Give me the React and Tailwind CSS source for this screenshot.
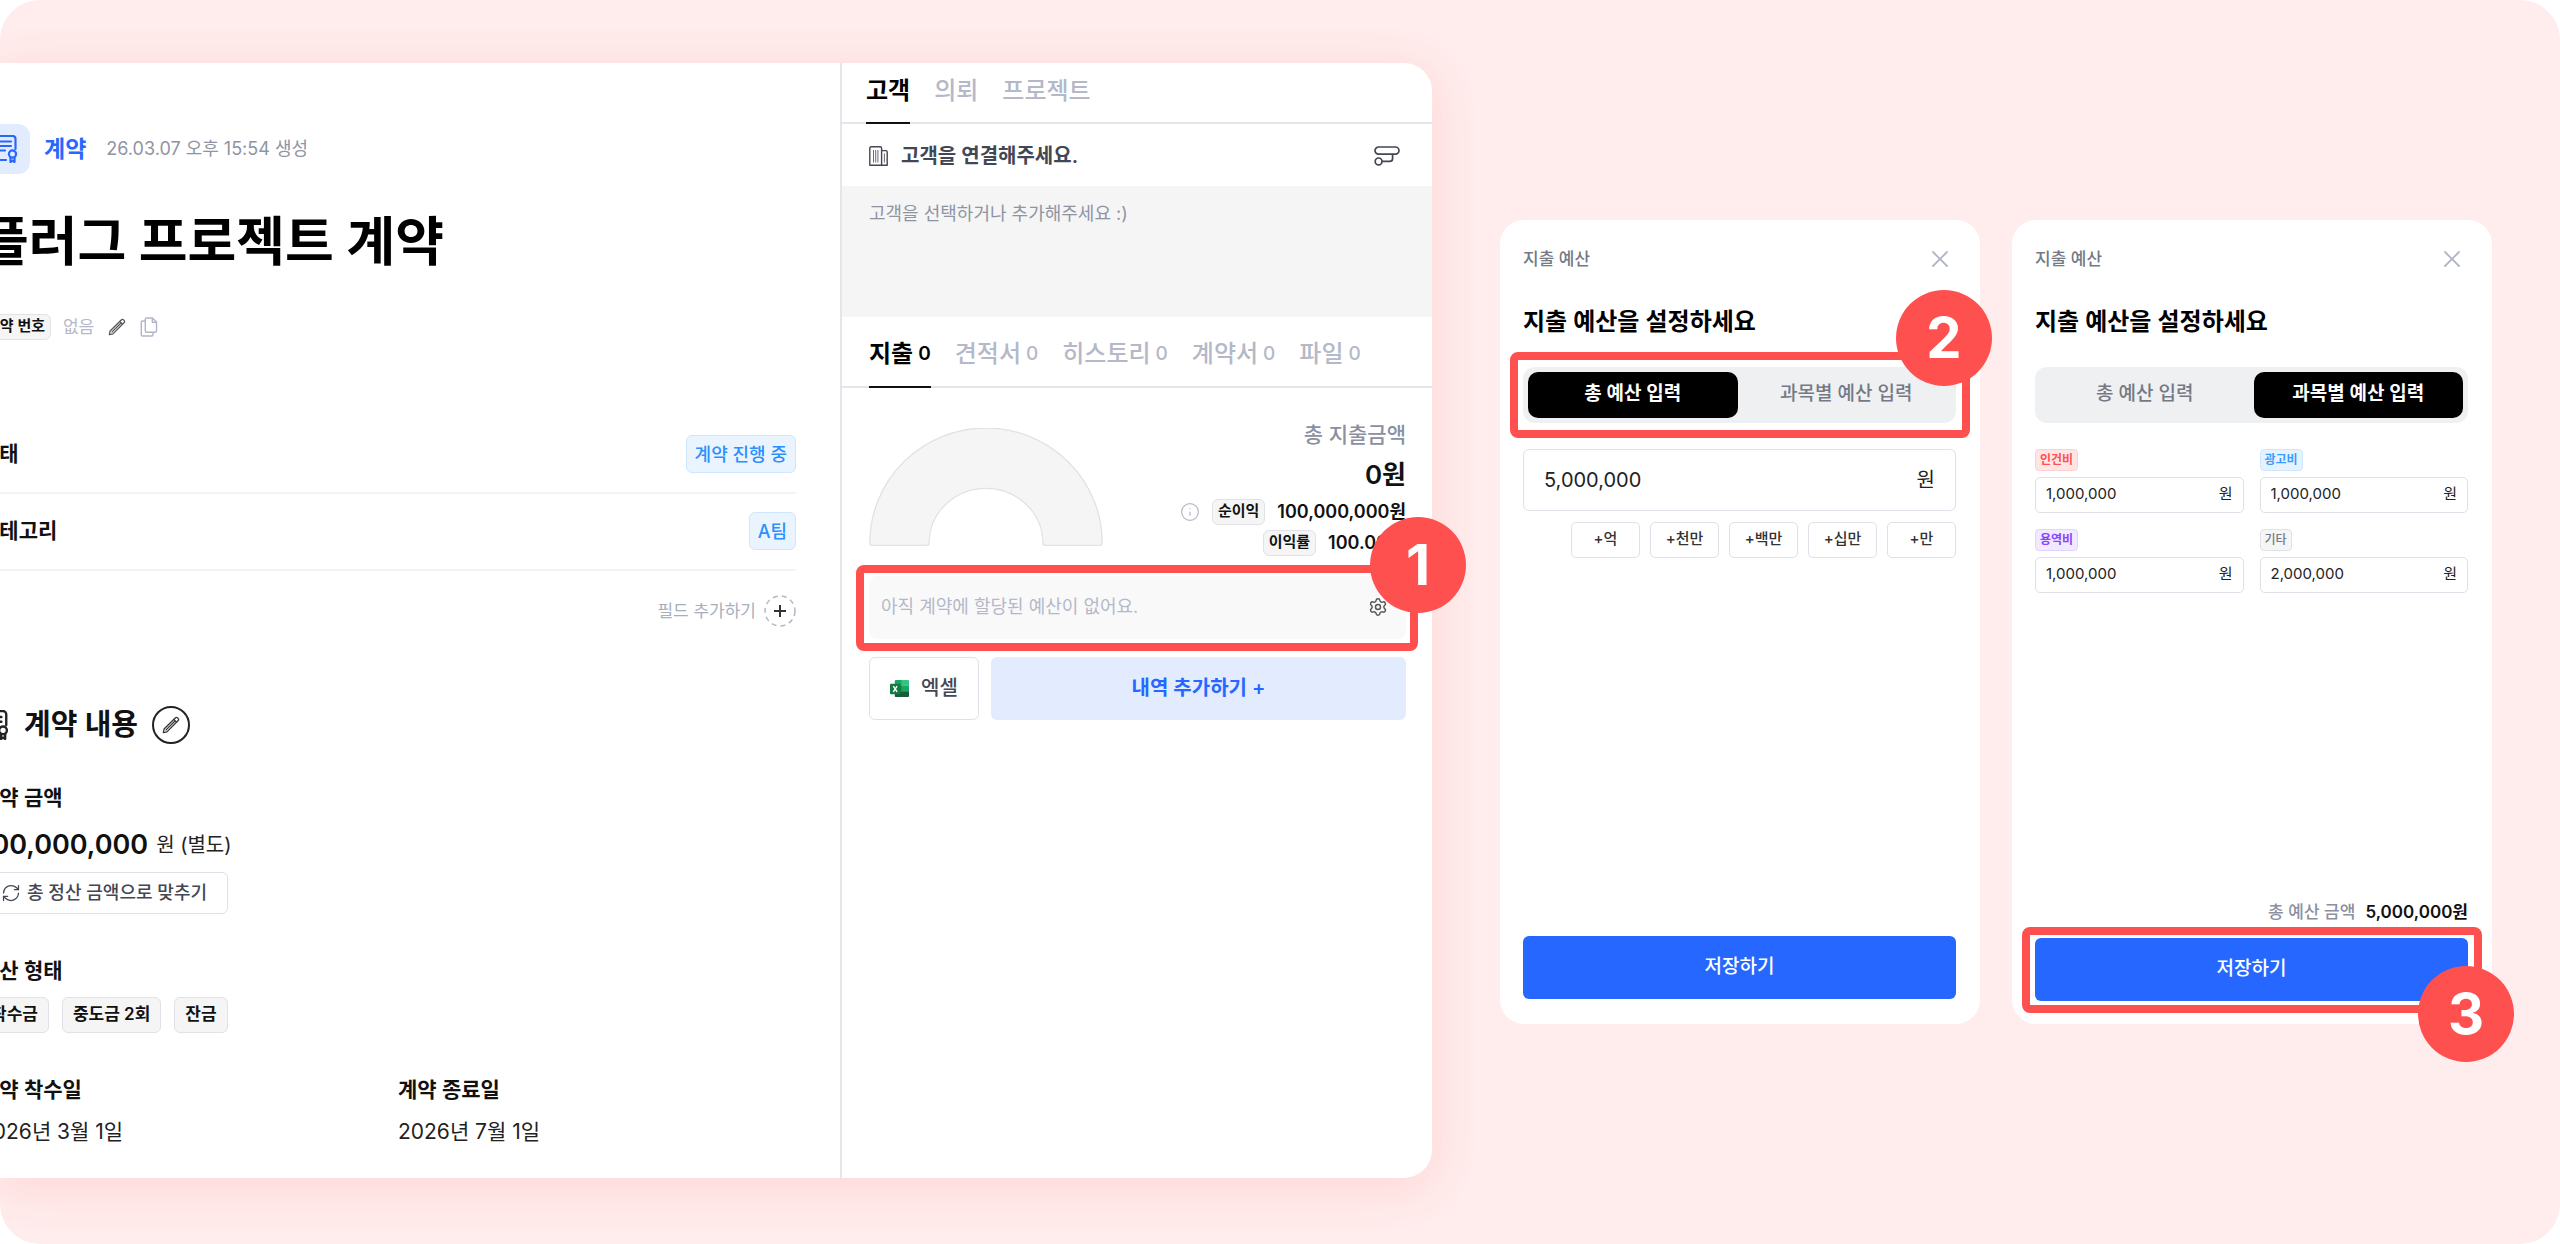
import { Info, RefreshCw, Settings } from "lucide-react";

function ContractIcon({ className }) {
  return (
    <svg viewBox="0 0 28 28" className={className} fill="none" stroke="currentColor" strokeWidth="2.200" strokeLinecap="round" strokeLinejoin="round" aria-hidden="true">
      <path d="M15 25H5a3 3 0 0 1-3-3V4a3 3 0 0 1 3-3h16.500a3 3 0 0 1 3 3v10" />
      <path d="M7 6.500h13M7 11h13M7 15.500h7" />
      <circle cx="21.500" cy="19" r="3.600" />
      <path d="M19.500 22.500V27l2-1.300 2 1.300v-4.500" />
    </svg>
  );
}

function PencilIcon({ className }) {
  return (
    <svg viewBox="0 0 20 20" className={className} fill="none" stroke="currentColor" strokeWidth="1.400" strokeLinejoin="round" aria-hidden="true">
      <path d="M1.500 18.500l.8-4L15 2a1.500 1.500 0 0 1 2.100 0l.9.9a1.500 1.500 0 0 1 0 2.100L5.500 17.700z" />
      <path d="M13.200 3.800l3 3M4 16L14.700 5.300" />
    </svg>
  );
}

function CopyIcon({ className }) {
  return (
    <svg viewBox="0 0 18 20" className={className} fill="none" stroke="currentColor" strokeWidth="1.400" strokeLinejoin="round" aria-hidden="true">
      <path d="M6.500 1h6l4 4v9a1.200 1.200 0 0 1-1.200 1.200H6.500A1.200 1.200 0 0 1 5.300 14V2.200A1.200 1.200 0 0 1 6.500 1z" />
      <path d="M12.300 1v4.200h4.200" />
      <path d="M5 4H2.500A1.200 1.200 0 0 0 1.300 5.200v12.600A1.200 1.200 0 0 0 2.500 19h9.300a1.200 1.200 0 0 0 1.200-1.200v-2.500" />
    </svg>
  );
}

function BuildingIcon({ className }) {
  return (
    <svg viewBox="0 0 20 20" className={className} fill="none" stroke="currentColor" strokeWidth="1.400" strokeLinejoin="round" aria-hidden="true">
      <path d="M.8 19.200V2.200A1.400 1.400 0 0 1 2.200.8h9a1.400 1.400 0 0 1 1.400 1.400v17z" />
      <path d="M12.600 4.600h4.200A1.400 1.400 0 0 1 18.200 6v13.200h-5.600" />
      <path d="M4.500 4v12.500M6.700 4v12.500M8.900 4v12.500M15.400 7.500v9" strokeWidth=".8" />
    </svg>
  );
}

function ConnectIcon({ className }) {
  return (
    <svg viewBox="0 0 26 20" className={className} fill="none" stroke="currentColor" strokeWidth="1.700" strokeLinejoin="round" aria-hidden="true">
      <rect x="1" y="1" width="24" height="7.200" rx="3.600" />
      <circle cx="4.600" cy="15.400" r="3.400" />
      <path d="M8 15.400h7.600a3 3 0 0 0 3-3V8.200" />
    </svg>
  );
}

function CloseIcon() {
  return (
    <svg viewBox="0 0 16 16" className="size-4" fill="none" stroke="currentColor" strokeWidth="1.800" strokeLinecap="round" aria-hidden="true">
      <path d="M1 1l14 14M15 1L1 15" />
    </svg>
  );
}

function ExcelIcon() {
  return (
    <svg viewBox="0 0 20 20" className="size-[19px]" aria-hidden="true">
      <path d="M6 1h7v6H5V2a1 1 0 0 1 1-1z" fill="#21a366" />
      <path d="M12 1h7a1 1 0 0 1 1 1v5h-8z" fill="#33c481" />
      <path d="M5 7h8v6H5z" fill="#107c41" />
      <path d="M12 7h8v6h-8z" fill="#21a366" />
      <path d="M5 13h15v5a1 1 0 0 1-1 1H6a1 1 0 0 1-1-1z" fill="#185c37" />
      <rect x="0" y="5" width="11" height="11" rx="1" fill="#107c41" />
      <path d="M3.500 7.500l4 6M7.500 7.500l-4 6" stroke="#fff" strokeWidth="1.500" />
    </svg>
  );
}

function Marker({ n, className }) {
  return (
    <span className={`absolute z-10 flex size-24 items-center justify-center rounded-full bg-[#ff5050] text-[56px] leading-none font-bold text-white ${className}`}>
      {n}
    </span>
  );
}

function Frame({ className }) {
  return <span aria-hidden="true" className={`pointer-events-none absolute rounded-lg border-8 border-[#ff5050] ${className}`} />;
}

function GrayBadge({ children, className }) {
  return (
    <span className={`flex items-center rounded-md border border-[#e1e1e8] bg-[#f5f5f6] font-semibold text-[#111] ${className}`}>
      {children}
    </span>
  );
}

function FieldRow({ label, value }) {
  return (
    <div className="flex h-[77px] items-center justify-between border-b-2 border-[#f3f3f5]">
      <dt className="text-[21px] leading-7 font-semibold text-[#111]">{label}</dt>
      <dd className="flex h-[38px] items-center rounded-md border border-[#cfe6ff] bg-[#eaf4ff] px-2 text-[18px] font-medium text-[#2b8fff]">
        {value}
      </dd>
    </div>
  );
}

function ContractPane() {
  return (
    <section className="-ml-5 flex flex-1 flex-col pt-[61px] pr-11 pb-8">
      <div className="flex items-center">
        <span className="flex size-[50px] items-center justify-center rounded-xl bg-[#e3ebff] text-[#2668ff]">
          <ContractIcon className="size-7" />
        </span>
        <span className="ml-3.5 text-[23px] leading-8 font-semibold text-[#2668ff]">계약</span>
        <span className="ml-5 text-[18px] leading-8 text-[#8f94a3]">26.03.07 오후 15:54 생성</span>
      </div>
      <h1 className="mt-[30px] text-[53px] leading-[76px] font-bold text-black">플러그 프로젝트 계약</h1>
      <div className="mt-[33px] flex h-7 items-center">
        <GrayBadge className="h-[26px] px-[5px] text-[15px]">계약 번호</GrayBadge>
        <span className="ml-3 text-[17px] leading-7 text-[#b4b8c8]">없음</span>
        <button type="button" aria-label="계약 번호 수정" className="ml-3.5 text-[#555]">
          <PencilIcon className="size-[18px]" />
        </button>
        <button type="button" aria-label="계약 번호 복사" className="ml-3.5 text-[#b0b6c8]">
          <CopyIcon className="h-5 w-[18px]" />
        </button>
      </div>
      <dl className="mt-[76px]">
        <FieldRow label="상태" value="계약 진행 중" />
        <FieldRow label="카테고리" value="A팀" />
      </dl>
      <button type="button" className="mt-6 flex items-center gap-2 self-end text-[17px] leading-8 text-[#a9aebd]">
        필드 추가하기
        <svg viewBox="0 0 32 32" className="size-8" fill="none" aria-hidden="true">
          <circle cx="16" cy="16" r="15" stroke="#b4b6c4" strokeWidth="1.500" strokeDasharray="5 4" />
          <path d="M16 10v12M10 16h12" stroke="#333" strokeWidth="2" />
        </svg>
      </button>

      <div className="mt-[79px] flex h-[38px] items-center">
        <ContractIcon className="size-[30px] text-[#222]" />
        <h2 className="ml-3.5 text-[29px] leading-[38px] font-semibold text-[#111]">계약 내용</h2>
        <button type="button" aria-label="계약 내용 수정" className="ml-3.5 flex size-[38px] items-center justify-center rounded-full border-2 border-[#222] text-[#333]">
          <PencilIcon className="size-[18px]" />
        </button>
      </div>

      <h3 className="mt-10 text-[21px] leading-7 font-semibold text-[#111]">계약 금액</h3>
      <p className="mt-[13px] flex items-center gap-2 text-[20px] leading-10 text-[#222]">
        <span className="text-[27px] font-semibold text-[#111]">100,000,000</span>
        원 (별도)
      </p>
      <button type="button" className="mt-[7px] flex h-[42px] items-center gap-1.5 self-start rounded-md border border-[#dfe0e8] pr-5 pl-5 text-[18px] font-medium text-[#434754]">
        <RefreshCw className="size-5" strokeWidth={1.5} />
        총 정산 금액으로 맞추기
      </button>

      <h3 className="mt-[43px] text-[21px] leading-7 font-semibold text-[#111]">정산 형태</h3>
      <div className="mt-3 flex gap-[13px]">
        <GrayBadge className="h-9 px-2.5 text-[17px]">착수금</GrayBadge>
        <GrayBadge className="h-9 px-2.5 text-[17px]">중도금 2회</GrayBadge>
        <GrayBadge className="h-9 px-2.5 text-[17px]">잔금</GrayBadge>
      </div>

      <div className="mt-[43px] grid grid-cols-2 gap-5">
        <div>
          <h3 className="text-[21px] leading-7 font-semibold text-[#111]">계약 착수일</h3>
          <p className="mt-3.5 text-[21px] leading-7 text-[#222]">2026년 3월 1일</p>
        </div>
        <div>
          <h3 className="text-[21px] leading-7 font-semibold text-[#111]">계약 종료일</h3>
          <p className="mt-3.5 text-[21px] leading-7 text-[#222]">2026년 7월 1일</p>
        </div>
      </div>
    </section>
  );
}

function Tab({ label, count, active }) {
  return (
    <button
      type="button"
      role="tab"
      aria-selected={active}
      className={`-mb-0.5 flex items-center gap-[5px] border-b-2 text-[24px] leading-8 ${count === undefined ? "pb-0.5" : "pt-1.5"} ${active ? "border-[#111] font-semibold text-black" : "border-transparent font-medium text-[#b4b8c8]"}`}
    >
      {label}
      {count !== undefined && <span className="text-[19px]">{count}</span>}
    </button>
  );
}

const LOWER_TABS = ["지출", "견적서", "히스토리", "계약서", "파일"];

function SpendingPane() {
  return (
    <section className="w-[592px] border-l-2 border-[#e5e5ec]">
      <div role="tablist" className="flex h-[61px] items-stretch gap-6 border-b-2 border-[#e5e5ec] pl-6">
        <Tab label="고객" active />
        <Tab label="의뢰" active={false} />
        <Tab label="프로젝트" active={false} />
      </div>
      <div className="flex h-[62px] items-center pt-0.5 pr-8 pl-[27px] text-[#434754]">
        <BuildingIcon className="size-5" />
        <p className="ml-3 flex-1 text-[20px] leading-7 font-semibold">고객을 연결해주세요.</p>
        <button type="button" aria-label="고객 연결">
          <ConnectIcon className="h-5 w-[26px]" />
        </button>
      </div>
      <p className="h-[131px] bg-[#f5f5f5] py-3.5 pl-[27px] text-[18px] leading-7 text-[#8f94a3]">고객을 선택하거나 추가해주세요 :)</p>
      <div role="tablist" className="flex h-[71px] items-stretch gap-6 border-b-2 border-[#e5e5ec] pl-[27px]">
        {LOWER_TABS.map((t, i) => (
          <Tab key={t} label={t} count={0} active={i === 0} />
        ))}
      </div>

      <div className="pt-[33px] pr-[26px] pl-[27px]">
        <div className="flex items-start justify-between">
          <svg viewBox="0 0 234 118" className="mt-[7px] h-[118px] w-[234px]" aria-label="지출 비율">
            <path d="M3 117.300A2 2 0 0 1 .8 115 116.200 115 0 0 1 233.200 115a2 2 0 0 1-2.200 2.300h-55a2 2 0 0 1-2-2 57 55 0 0 0-114 0 2 2 0 0 1-2 2z" fill="#f5f5f5" stroke="#e2e2e2" strokeWidth="1.300" />
          </svg>
          <div className="flex flex-col items-end text-[#111]">
            <p className="text-[21px] leading-7 font-medium text-[#8b90a1]">총 지출금액</p>
            <p className="mt-2 text-[26px] leading-9 font-semibold">0원</p>
            <p className="mt-1.5 flex h-[26px] items-center text-[18px] font-semibold">
              <Info className="size-5 text-[#b4b8c8]" strokeWidth={1.5} />
              <GrayBadge className="ml-3 h-[26px] px-[5px] text-[15px]">순이익</GrayBadge>
              <span className="ml-3">100,000,000원</span>
            </p>
            <p className="mt-[5px] flex h-[26px] items-center text-[18px] font-semibold">
              <GrayBadge className="h-[26px] px-[5px] text-[15px]">이익률</GrayBadge>
              <span className="ml-3">100.00%</span>
            </p>
          </div>
        </div>

        <div className="relative mt-5 flex h-[63px] items-center justify-between rounded-lg bg-[#f9f9f9] pr-[18px] pl-3">
          <p className="text-[18px] leading-7 text-[#b4b8c8]">아직 계약에 할당된 예산이 없어요.</p>
          <button type="button" aria-label="예산 설정" className="text-[#555]">
            <Settings className="size-5" strokeWidth={1.75} />
          </button>
          <Frame className="-top-[11px] -right-3 -bottom-3 -left-[13px]" />
          <Marker n={1} className="-top-[59px] -right-[60px]" />
        </div>

        <div className="mt-[18px] flex gap-3">
          <button type="button" className="flex h-[63px] w-[110px] items-center justify-center gap-3 rounded-md border border-[#dfe0e8] text-[20px] font-medium text-[#434754]">
            <ExcelIcon />
            엑셀
          </button>
          <button type="button" className="h-[63px] flex-1 rounded-md bg-[#e3ebff] text-[20px] font-semibold text-[#2668ff]">
            내역 추가하기 +
          </button>
        </div>
      </div>
    </section>
  );
}

function ModeButton({ active, children }) {
  return (
    <button
      type="button"
      aria-pressed={active}
      className={`flex-1 rounded-[10px] text-[19px] ${active ? "bg-black font-semibold text-white" : "font-medium text-[#747985]"}`}
    >
      {children}
    </button>
  );
}

function BudgetCard({ byItem, children }) {
  return (
    <section className="flex min-h-[804px] w-[480px] flex-col rounded-3xl bg-white pt-[27px] pr-6 pb-[23px] pl-[23px]">
      <div className="flex h-6 items-center justify-between pr-2">
        <p className="text-[17px] leading-6 font-medium text-[#747985]">지출 예산</p>
        <button type="button" aria-label="닫기" className="text-[#b0b6c8]">
          <CloseIcon />
        </button>
      </div>
      <h2 className="mt-[33px] text-[24px] leading-9 font-semibold text-black">지출 예산을 설정하세요</h2>
      <div className="relative mt-[27px] flex h-14 gap-1 rounded-xl bg-[#eff0f2] p-[5px]">
        <ModeButton active={!byItem}>총 예산 입력</ModeButton>
        <ModeButton active={byItem}>과목별 예산 입력</ModeButton>
        {!byItem && <Frame className="-inset-y-[15px] -right-3.5 -left-[13px]" />}
        {!byItem && <Marker n={2} className="-top-[77px] -right-9" />}
      </div>
      {children}
    </section>
  );
}

function SaveButton({ children }) {
  return (
    <div className="relative flex">
      <button type="button" className="h-[63px] flex-1 rounded-md bg-[#2668ff] text-[19px] font-medium text-white">
        저장하기
      </button>
      {children}
    </div>
  );
}

const STEPS = ["+억", "+천만", "+백만", "+십만", "+만"];

const ITEMS = [
  { name: "인건비", value: "1,000,000", tone: "border-[#ffcfcf] bg-[#ffe6e6] font-bold text-[#ff5050]" },
  { name: "광고비", value: "1,000,000", tone: "border-[#cfe6ff] bg-[#e6f3ff] font-bold text-[#3a9bff]" },
  { name: "용역비", value: "1,000,000", tone: "border-[#e2d4ff] bg-[#f0e9ff] font-bold text-[#8d42ff]" },
  { name: "기타", value: "2,000,000", tone: "border-[#e1e1e8] bg-[#f5f5f6] font-medium text-[#747985]" },
];

export default function App() {
  return (
    <main className='flex min-h-screen items-center overflow-hidden rounded-[40px] bg-[#ffecec] pt-[62px] pr-[68px] pb-[66px] font-[Inter,"Noto_Sans_CJK_KR",sans-serif] whitespace-nowrap'>
      <article className="flex flex-1 rounded-r-[28px] bg-white shadow-[0_8px_48px_rgba(255,80,80,0.14)]">
        <ContractPane />
        <SpendingPane />
      </article>

      <div className="mt-[3px] ml-[68px] flex gap-8">
        <BudgetCard byItem={false}>
          <label className="mt-[26px] flex h-[62px] items-center rounded-md border border-[#dfe0e8] px-5 text-[20px] text-[#222]">
            <input aria-label="총 예산" defaultValue="5,000,000" className="w-0 flex-1 outline-none" />
            원
          </label>
          <div className="mt-[11px] flex justify-end gap-2.5">
            {STEPS.map((s) => (
              <button key={s} type="button" className="h-9 w-[69px] rounded-[5px] border border-[#dfe0e8] text-[15px] font-medium text-[#333]">
                {s}
              </button>
            ))}
          </div>
          <div className="mt-auto mb-0.5">
            <SaveButton />
          </div>
        </BudgetCard>

        <BudgetCard byItem>
          <div className="mt-[26px] grid grid-cols-2 gap-4">
            {ITEMS.map((it) => (
              <label key={it.name} className="flex flex-col items-start gap-1.5">
                <span className={`flex h-[22px] items-center rounded border px-1 text-[12px] ${it.tone}`}>{it.name}</span>
                <span className="flex h-9 w-full items-center rounded-[5px] border border-[#dfe0e8] px-2.5 text-[15px] text-[#222]">
                  <input defaultValue={it.value} className="w-0 flex-1 outline-none" />
                  원
                </span>
              </label>
            ))}
          </div>
          <p className="mt-auto mb-3 flex items-center justify-end gap-2.5 text-[17px] leading-7 font-medium text-[#8b90a1]">
            총 예산 금액
            <strong className="font-semibold text-[#111]">5,000,000원</strong>
          </p>
          <SaveButton>
            <Frame className="-top-[11px] -right-3.5 -bottom-3 -left-[13px]" />
            <Marker n={3} className="top-7 -right-[46px]" />
          </SaveButton>
        </BudgetCard>
      </div>
    </main>
  );
}
